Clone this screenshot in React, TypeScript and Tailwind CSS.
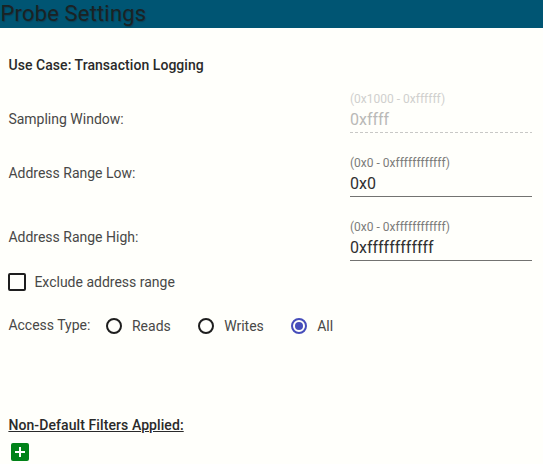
import { useState } from "react";

type FieldProps = {
  label: string;
  hint: string;
  initial: string;
  disabled?: boolean;
};

function Field({ label, hint, initial, disabled = false }: FieldProps) {
  const [value, setValue] = useState(initial);
  return (
    <label className="flex h-16 items-start justify-between pr-[11px] pl-[8.4px]">
      <span className={disabled ? "pt-[19px] leading-5" : "pt-[9px] leading-5"}>{label}</span>
      <span
        className={
          disabled
            ? "flex h-[43px] w-[182px] flex-col text-[#b9b9b7]"
            : "flex h-[43px] w-[182px] flex-col border-b border-[#737371] text-[#303030]"
        }
      >
        <span
          className={
            disabled
              ? "h-[18px] text-xs leading-[18px] text-[#d0d0ce]"
              : "h-[18px] text-xs leading-[18px] text-[#7c7c7a]"
          }
        >
          {hint}
        </span>
        <input
          className="h-6 w-full bg-transparent p-0 text-base leading-6 outline-none"
          value={value}
          disabled={disabled}
          onChange={(e) => setValue(e.target.value)}
        />
        {disabled && (
          <span className="h-px w-full bg-[repeating-linear-gradient(90deg,#c8c8c6_0_3px,transparent_3px_5px)]" />
        )}
      </span>
    </label>
  );
}

type RadioProps = {
  label: string;
  checked: boolean;
  onSelect: () => void;
};

function Radio({ label, checked, onSelect }: RadioProps) {
  return (
    <button
      type="button"
      role="radio"
      aria-checked={checked}
      onClick={onSelect}
      className="flex items-center gap-[10px]"
    >
      <span
        className={
          checked
            ? "flex size-4 items-center justify-center rounded-full border-2 border-[#464dba]"
            : "flex size-4 items-center justify-center rounded-full border-2 border-[#1e1e1e]"
        }
      >
        {checked && <span className="size-2 rounded-full bg-[#464dba]" />}
      </span>
      <span className="leading-5">{label}</span>
    </button>
  );
}

export default function App() {
  const [access, setAccess] = useState("All");
  const [exclude, setExclude] = useState(false);

  return (
    <div className="h-[464px] w-[543px] overflow-hidden bg-[#fffffb] font-[Roboto,sans-serif] text-sm text-[#484847]">
      <header className="h-7 bg-[#005573] pl-[0.5px] text-[22px] leading-7 tracking-[0.16px] text-[#1b2224] [text-shadow:0.5px_0.5px_1px_rgba(20,30,34,0.35)]">
        Probe Settings
      </header>

      <h2 className="mt-[27px] mb-[15px] pl-[8.5px] leading-5 font-medium tracking-[0.05px] text-[#2a2a2a]">
        Use Case: Transaction Logging
      </h2>

      <Field label="Sampling Window:" hint="(0x1000 - 0xffffff)" initial="0xffff" disabled />
      <Field label="Address Range Low:" hint="(0x0 - 0xffffffffffff)" initial="0x0" />
      <Field label="Address Range High:" hint="(0x0 - 0xffffffffffff)" initial="0xffffffffffff" />

      <button
        type="button"
        role="checkbox"
        aria-checked={exclude}
        onClick={() => setExclude(!exclude)}
        className="-mt-[10px] flex h-5 items-center gap-[8.4px] pl-2"
      >
        <span
          className={
            exclude
              ? "size-[18px] rounded-xs border-2 border-[#464dba] bg-[#464dba]"
              : "size-[18px] rounded-xs border-2 border-[#1e1e1e]"
          }
        />
        <span className="leading-5">Exclude address range</span>
      </button>

      <div className="mt-6 flex h-5 items-center pl-[8.4px]">
        <span className="w-[97.6px] pb-0.5 leading-5">Access Type:</span>
        <div role="radiogroup" className="flex gap-[27.4px]">
          {["Reads", "Writes", "All"].map((option) => (
            <Radio
              key={option}
              label={option}
              checked={access === option}
              onSelect={() => setAccess(option)}
            />
          ))}
        </div>
      </div>

      <h2 className="mt-[79px] pl-[8.4px] leading-5 font-medium tracking-[0.09px] text-[#2a2a2a] underline">
        Non-Default Filters Applied:
      </h2>
      <button type="button" aria-label="Add filter" className="mt-2 ml-[11px] block size-[18px]">
        <svg viewBox="0 0 18 18" className="size-[18px]">
          <rect width="18" height="18" rx="2" fill="#008218" />
          <path d="M8 4h2v4h4v2h-4v4H8v-4H4V8h4z" fill="#fff" />
        </svg>
      </button>
    </div>
  );
}
